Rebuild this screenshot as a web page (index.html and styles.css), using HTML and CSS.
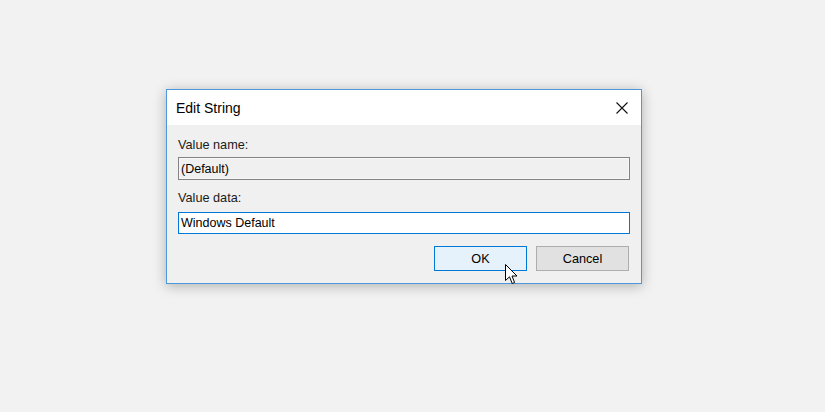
FILE: index.html
```html
<!DOCTYPE html>
<html>
<head>
<meta charset="utf-8">
<link rel="stylesheet" href="styles.css">
</head>
<body>
<div class="dialog">
  <div class="titlebar">
    <span class="title">Edit String</span>
    <svg class="close" width="12" height="12" viewBox="0 0 12 12"><path d="M0.5 0.5 L11.5 11.5 M11.5 0.5 L0.5 11.5" stroke="#111" stroke-width="1.1" fill="none"/></svg>
  </div>
  <div class="content">
    <div class="label">Value name:</div>
    <div class="field readonly">(Default)</div>
    <div class="label second">Value data:</div>
    <div class="field focused">Windows Default</div>
    <div class="buttons">
      <div class="btn default">OK</div>
      <div class="btn">Cancel</div>
    </div>
  </div>
  <svg class="cursor" width="13" height="21" viewBox="0 0 13 21"><path d="M0.5 0.5 L0.5 16.5 L4.5 12.8 L7.2 19.5 L9.6 18.5 L7 12 L12 12 Z" fill="#fff" stroke="#000" stroke-width="1" stroke-linejoin="miter"/></svg>
</div>
</body>
</html>
```
FILE: styles.css
```css
html, body {
  margin: 0;
  padding: 0;
}
body {
  background: #f2f2f2;
  width: 825px;
  height: 412px;
  overflow: hidden;
  font-family: "Liberation Sans", Arial, sans-serif;
  color: #000;
}
.dialog {
  position: relative;
  box-sizing: border-box;
  width: 476px;
  height: 195px;
  margin: 89px 0 0 166px;
  border: 1px solid #4d97dc;
  background: #f0f0f0;
  box-shadow: 0 2px 12px rgba(0, 0, 0, 0.28);
}
.titlebar {
  height: 35px;
  background: #fff;
  display: flex;
  align-items: center;
  justify-content: space-between;
  padding: 0 13px 0 9px;
}
.title {
  font-size: 14px;
  line-height: 16px;
  padding-top: 1px;
}
.close {
  display: block;
}
.content {
  padding: 12px 11px 0 11px;
  display: flex;
  flex-direction: column;
}
.label {
  font-size: 12.7px;
  line-height: 15px;
  padding-top: 1px;
  color: #1a1a1a;
}
.label.second {
  margin-top: 10px;
}
.field {
  box-sizing: border-box;
  width: 452px;
  height: 23px;
  margin-top: 4px;
  font-size: 12.5px;
  line-height: 21px;
  padding: 1px 0 0 2px;
}
.field.readonly {
  border: 1px solid #838383;
  background: #f0f0f0;
  box-shadow: inset 0 0 0 1px #f7f7f7;
}
.field.focused {
  margin-top: 6px;
  height: 22px;
  line-height: 19px;
  border: 1px solid #0078d7;
  background: #fff;
}
.buttons {
  display: flex;
  justify-content: flex-end;
  gap: 9px;
  margin-top: 12px;
  padding-right: 1px;
}
.btn {
  box-sizing: border-box;
  width: 93px;
  height: 25px;
  border: 1px solid #adadad;
  background: #e1e1e1;
  font-size: 12.7px;
  line-height: 23px;
  padding-top: 1px;
  text-align: center;
}
.btn.default {
  border-color: #0078d7;
  background: #e5f1fb;
}
.cursor {
  position: absolute;
  left: 338px;
  top: 174px;
}
```
